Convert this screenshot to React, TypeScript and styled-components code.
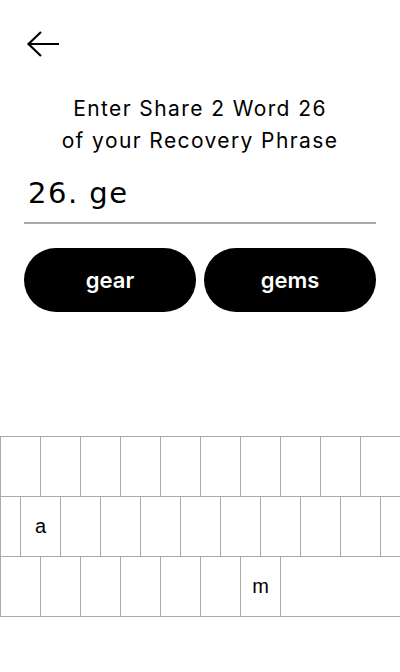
import React from "react";
import styled, { createGlobalStyle } from "styled-components";

const Global = createGlobalStyle`
  html, body { margin: 0; padding: 0; background: #fff; }
  body { font-family: Inter, "Noto Sans", sans-serif; color: #000; }
  * { box-sizing: border-box; }
`;

const Screen = styled.div`
  width: 400px;
  height: 672px;
  display: flex;
  flex-direction: column;
  background: #fff;
  overflow: hidden;
`;

const Header = styled.div`
  height: 64px;
  padding: 24px 24px 0;
  display: flex;
  align-items: flex-start;
`;

const BackButton = styled.button`
  width: 40px;
  height: 40px;
  padding: 0;
  border: 0;
  background: none;
  display: flex;
  align-items: center;
  justify-content: center;
  cursor: pointer;
`;

const Title = styled.h1`
  margin: 29px 0 0;
  font-family: Inter, sans-serif;
  font-weight: 400;
  font-size: 21px;
  letter-spacing: 1.4px;
  line-height: 32px;
  text-align: center;
  color: #000;
`;

const InputRow = styled.div`
  margin: 20px 24px 0;
  padding: 0 4px 13px;
  border-bottom: 2px solid #aaaaaa;
  font-family: "DejaVu Sans", "Liberation Sans", sans-serif;
  font-size: 29px;
  letter-spacing: 1.5px;
  line-height: 32px;
  white-space: pre;
  color: #000;
`;

const Suggestions = styled.div`
  margin: 24px 24px 0;
  display: grid;
  grid-template-columns: 1fr 1fr;
  gap: 8px;
`;

const Pill = styled.button`
  height: 64px;
  border: 0;
  border-radius: 32px;
  background: #000;
  color: #fff;
  font-family: Inter, sans-serif;
  font-weight: 600;
  font-size: 22px;
  display: flex;
  align-items: center;
  justify-content: center;
  cursor: pointer;
`;

const Keyboard = styled.div`
  margin-top: auto;
  margin-bottom: 55px;
  border-bottom: 1px solid #aaaaaa;
`;

const KeyRow = styled.div`
  display: flex;
  height: 60px;
`;

const Key = styled.div<{ $w: number }>`
  width: ${(p) => p.$w}px;
  flex: ${(p) => (p.$w ? "0 0 auto" : "1 1 auto")};
  height: 60px;
  border-left: 1px solid #aaaaaa;
  border-top: 1px solid #aaaaaa;
  display: flex;
  align-items: center;
  justify-content: center;
  font-family: "Liberation Sans", Arial, sans-serif;
  font-size: 20px;
  color: #000;
`;

const rows: { pre: number; keys: string[]; fill: boolean }[] = [
  { pre: 0, keys: "qwertyuiop".split(""), fill: false },
  { pre: 20, keys: "asdfghjkl".split(""), fill: true },
  { pre: 0, keys: "zxcvbnm".split(""), fill: true },
];

const enabled = new Set(["a", "m"]);

export default function App() {
  return (
    <>
      <Global />
      <Screen>
        <Header>
          <BackButton aria-label="Back">
            <svg width="40" height="40" viewBox="0 0 40 40" fill="none">
              <path
                d="M4.5 20 H35 M17 8 L4.5 20 L17 32"
                stroke="#000"
                strokeWidth="2.2"
                strokeLinecap="butt"
                strokeLinejoin="miter"
              />
            </svg>
          </BackButton>
        </Header>
        <Title>
          Enter Share 2 Word 26
          <br />
          of your Recovery Phrase
        </Title>
        <InputRow>26. ge</InputRow>
        <Suggestions>
          <Pill>gear</Pill>
          <Pill>gems</Pill>
        </Suggestions>
        <Keyboard>
          {rows.map((r, i) => (
            <KeyRow key={i}>
              {r.pre > 0 && <Key $w={r.pre} />}
              {r.keys.map((k) => (
                <Key key={k} $w={40}>
                  {enabled.has(k) ? k : ""}
                </Key>
              ))}
              {r.fill && <Key $w={0} />}
            </KeyRow>
          ))}
        </Keyboard>
      </Screen>
    </>
  );
}
